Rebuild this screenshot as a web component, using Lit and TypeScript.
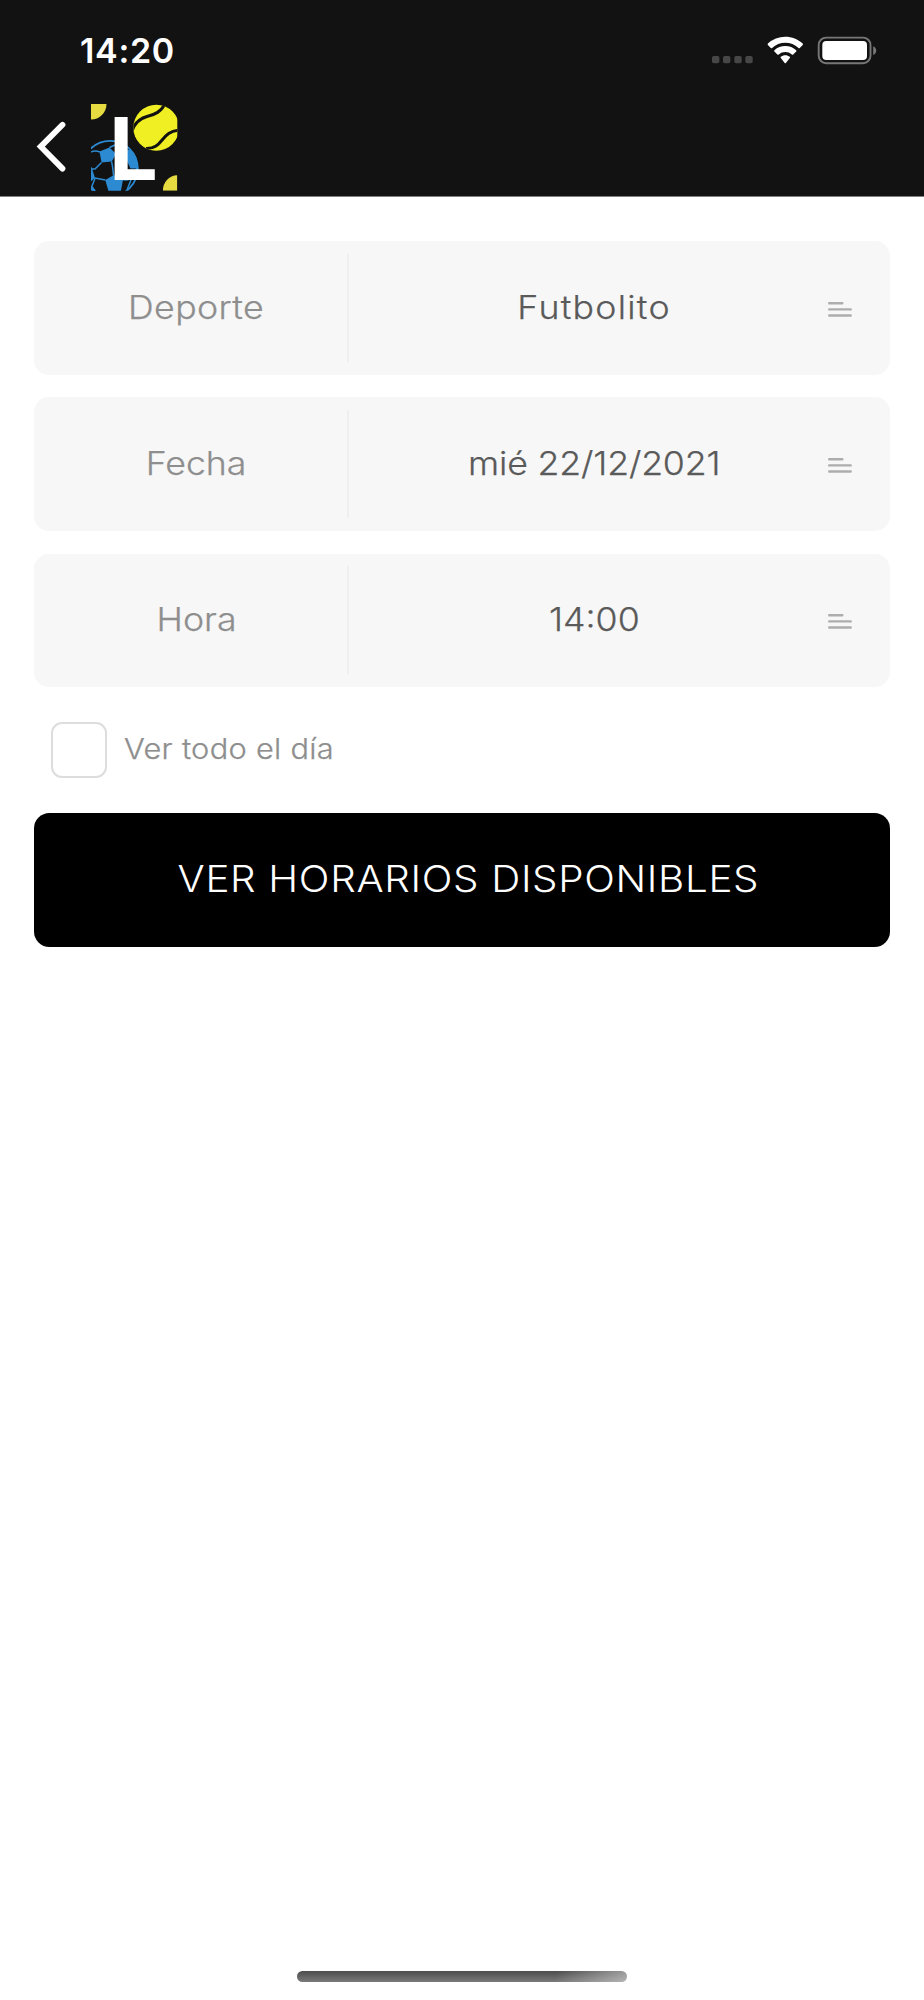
import { LitElement, html, svg, css } from "lit";
import { customElement, property } from "lit/decorators.js";
import { styleMap } from "lit/directives/style-map.js";

@customElement("status-bar")
class StatusBar extends LitElement {
  static styles = css`
    :host { display: flex; justify-content: space-between; height: 100px; color: #fff; }
    .time { padding: 30px 0 0 80px; font-size: 34px; font-weight: 600; line-height: 41px; letter-spacing: .7px; }
    svg { display: block; width: 224px; height: 100px; }
  `;
  render() {
    return html`
      <div class="time">14:20</div>
      <svg viewBox="700 0 224 100">
        ${[712, 723, 734.3, 745.3].map((x) => svg`<rect x=${x} y="56" width="7.4" height="7.2" rx="1.8" fill="#474747" />`)}
        <g fill="#fff">
          <path d="M785.3 36.8c6.6 0 12.7 2.5 17.4 6.8.4.4.4.9 0 1.3l-2.900 3c-.4.4-.9.4-1.3 0a19.400 19.400 0 0 0-26.400 0c-.4.4-.9.4-1.300 0l-2.900-3c-.4-.4-.4-.9 0-1.300a25.700 25.700 0 0 1 17.400-6.800z" />
          <path d="M785.3 46c4.2 0 8 1.600 10.900 4.200.4.400.4.900 0 1.300l-3 3c-.4.400-.8.400-1.300 0a10 10 0 0 0-13.200 0c-.5.400-.9.400-1.300 0l-3-3c-.4-.4-.4-.9 0-1.300a16.200 16.200 0 0 1 10.900-4.200z" />
          <path d="M785.3 55.2c1.7 0 3.3.6 4.5 1.6.4.4.4.9 0 1.2l-3.900 4.900c-.4.5-.8.5-1.200 0l-3.900-4.900c-.4-.3-.4-.8 0-1.200 1.200-1 2.800-1.600 4.500-1.600z" />
          <rect x="822.3" y="41" width="44.700" height="19" rx="4" />
        </g>
        <rect x="818.7" y="37.6" width="51.8" height="25.600" rx="7.5" fill="none" stroke="#777" stroke-width="1.9" />
        <path d="M873.2 46.200c4 1.400 4 7.400 0 8.700z" fill="#777" />
      </svg>
    `;
  }
}

@customElement("nav-bar")
class NavBar extends LitElement {
  static styles = css`
    :host { display: block; height: 96px; }
    svg { display: block; width: 200px; height: 96px; overflow: visible; }
    .letter { font: 700 86.5px Inter, sans-serif; fill: #fff; }
  `;
  render() {
    return html`
      <svg viewBox="0 100 200 96">
        <defs>
          <clipPath id="frame"><rect x="91" y="104" width="86.3" height="86.7" /></clipPath>
          <clipPath id="tennis"><circle cx="156.3" cy="127.7" r="23" /></clipPath>
          <clipPath id="soccer"><circle cx="110" cy="168.5" r="28.5" /></clipPath>
        </defs>
        <path d="M62.5 124.8L40.7 146.6L62.5 168.6" fill="none" stroke="#fff" stroke-width="5.8" stroke-linecap="round" />
        <g clip-path="url(#frame)">
          <path d="M91 104h15.5a15.5 15.5 0 0 1-15.5 15.5z" fill="#e6dc42" />
          <path d="M177.3 190.7H163a14.8 14.8 0 0 1 14.3-15.5z" fill="#e6dc42" />
          <g clip-path="url(#soccer)">
            <g fill="#2c8ad2">
              <path d="M99.5 151.5L109.5 147.5L116 154L111.8 161.5L101.5 162.5Z" />
              <path d="M105.3 180L114 175L123 179.5L120.5 193L109 193Z" />
              <path d="M90 166.5L91.5 167L95 178L90 182Z" />
              <path d="M125 149L132 150.5L137 158L139 168.5H130.5L127 161Z" />
              <path d="M91 186L96 191H91Z" />
            </g>
            <g fill="none" stroke="#2c8ad2" stroke-width="1.5">
              <path d="M90 147.500C97 144.500 105 144 115 141" stroke="none" />
              <path d="M91 152C94 150.500 97 151 100 152" />
              <path d="M109.500 147.500L116 144.500" />
              <path d="M101.500 162.500L95 169H91" />
              <path d="M111.500 161.500C112.800 166 113 170 113.500 175.500" />
              <path d="M105.500 180L94.500 178" />
              <path d="M95 178.500L91.800 186.500L95 191" />
              <path d="M122 179.500C127 180.500 131 179 133 177L137 168" />
              <path d="M131.500 178.500L127 190" />
            </g>
          </g>
          <circle cx="110" cy="168.5" r="27.700" fill="none" stroke="#2c8ad2" stroke-width="1.800" />
          <circle cx="156.3" cy="127.7" r="23" fill="#f0ef24" />
          <g clip-path="url(#tennis)" fill="none" stroke="#121212" stroke-width="3">
            <path d="M132 131C135 122 140 118.500 147 116.500C155 114.500 161 112 165.500 103" />
            <path d="M146 148.5C164 149 160 131 180 130" />
          </g>
        </g>
        <text class="letter" x="109" y="179.7">L</text>
      </svg>
    `;
  }
}

@customElement("field-row")
class FieldRow extends LitElement {
  @property() label = "";
  @property() value = "";
  @property({ type: Number }) labelTrack = 0;
  @property({ type: Number }) valueTrack = 0;
  static styles = css`
    :host { display: flex; align-items: center; height: 133.800px; border-radius: 15px; background: #f7f7f7;
      font-size: 32.6px; font-weight: 300; line-height: 40px; }
    .label, .value { box-sizing: border-box; text-align: center; padding-bottom: 2.5px; -webkit-text-stroke: .25px; }
    .label { width: 313px; padding-left: 12px; color: #8e8e8e; }
    .rule { width: 2px; height: 108px; background: #efefef; }
    .value { width: 479px; padding-left: 11px; color: #5a5a5a; }
    .text { display: inline-block; transform: scaleX(1.095); }
    svg { display: block; width: 24px; height: 15px; margin-top: 3px; }
  `;
  render() {
    return html`
      <div class="label"><span class="text" style=${styleMap({ letterSpacing: `${this.labelTrack}px` })}>${this.label}</span></div>
      <div class="rule"></div>
      <div class="value"><span class="text" style=${styleMap({ letterSpacing: `${this.valueTrack}px` })}>${this.value}</span></div>
      <svg viewBox="0 0 24 15" stroke="#adadad" stroke-width="2.4" stroke-linecap="round">
        <path d="M1.2 1.3H14.3M1.2 7.4H22.7M1.2 13.5H22.7" />
      </svg>
    `;
  }
}

@customElement("app-root")
class AppRoot extends LitElement {
  static styles = css`
    :host { display: flex; flex-direction: column; height: 2000px; background: #fff; font-family: Inter, sans-serif; }
    header { background: #121212; border-bottom: 1px solid #808080; }
    main { display: flex; flex-direction: column; flex: 1; padding: 44px 34px 0; }
    .fields { display: flex; flex-direction: column; gap: 22.5px; }
    .check { display: flex; align-items: center; gap: 16.500px; padding: 34.300px 0 35px 17.3px; color: #8e8e8e;
      font-size: 28px; font-weight: 300; line-height: 36px; letter-spacing: .26px; -webkit-text-stroke: .25px; }
    .box { box-sizing: border-box; width: 56px; height: 56px; border: 2px solid #ddd; border-radius: 11px; }
    .caption { padding-bottom: 1px; transform: scaleX(1.1); transform-origin: left; }
    .button { display: flex; align-items: center; justify-content: center; box-sizing: border-box; height: 134px;
      padding: 0 0 2px 12px; border: 0; border-radius: 15.5px; background: #000; color: #fff;
      font: 300 36.7px/44px Inter, sans-serif; letter-spacing: .6px; }
    .action { transform: scaleX(1.1); }
    .home { align-self: center; width: 330px; height: 11px; margin-bottom: 18px; border-radius: 6px;
      background: linear-gradient(100deg, transparent 78%, #ffffff70 100%), linear-gradient(#4c4c4c, #7a7a7a); }
  `;
  render() {
    return html`
      <header><status-bar></status-bar><nav-bar></nav-bar></header>
      <main>
        <div class="fields">
          <field-row label="Deporte" value="Futbolito" .labelTrack=${0.33} .valueTrack=${1.15}></field-row>
          <field-row label="Fecha" value="mié 22/12/2021" .labelTrack=${0} .valueTrack=${-0.15}></field-row>
          <field-row label="Hora" value="14:00" .labelTrack=${0} .valueTrack=${0}></field-row>
        </div>
        <div class="check"><span class="box"></span><span class="caption">Ver todo el día</span></div>
        <button class="button"><span class="action">VER HORARIOS DISPONIBLES</span></button>
      </main>
      <div class="home"></div>
    `;
  }
}
